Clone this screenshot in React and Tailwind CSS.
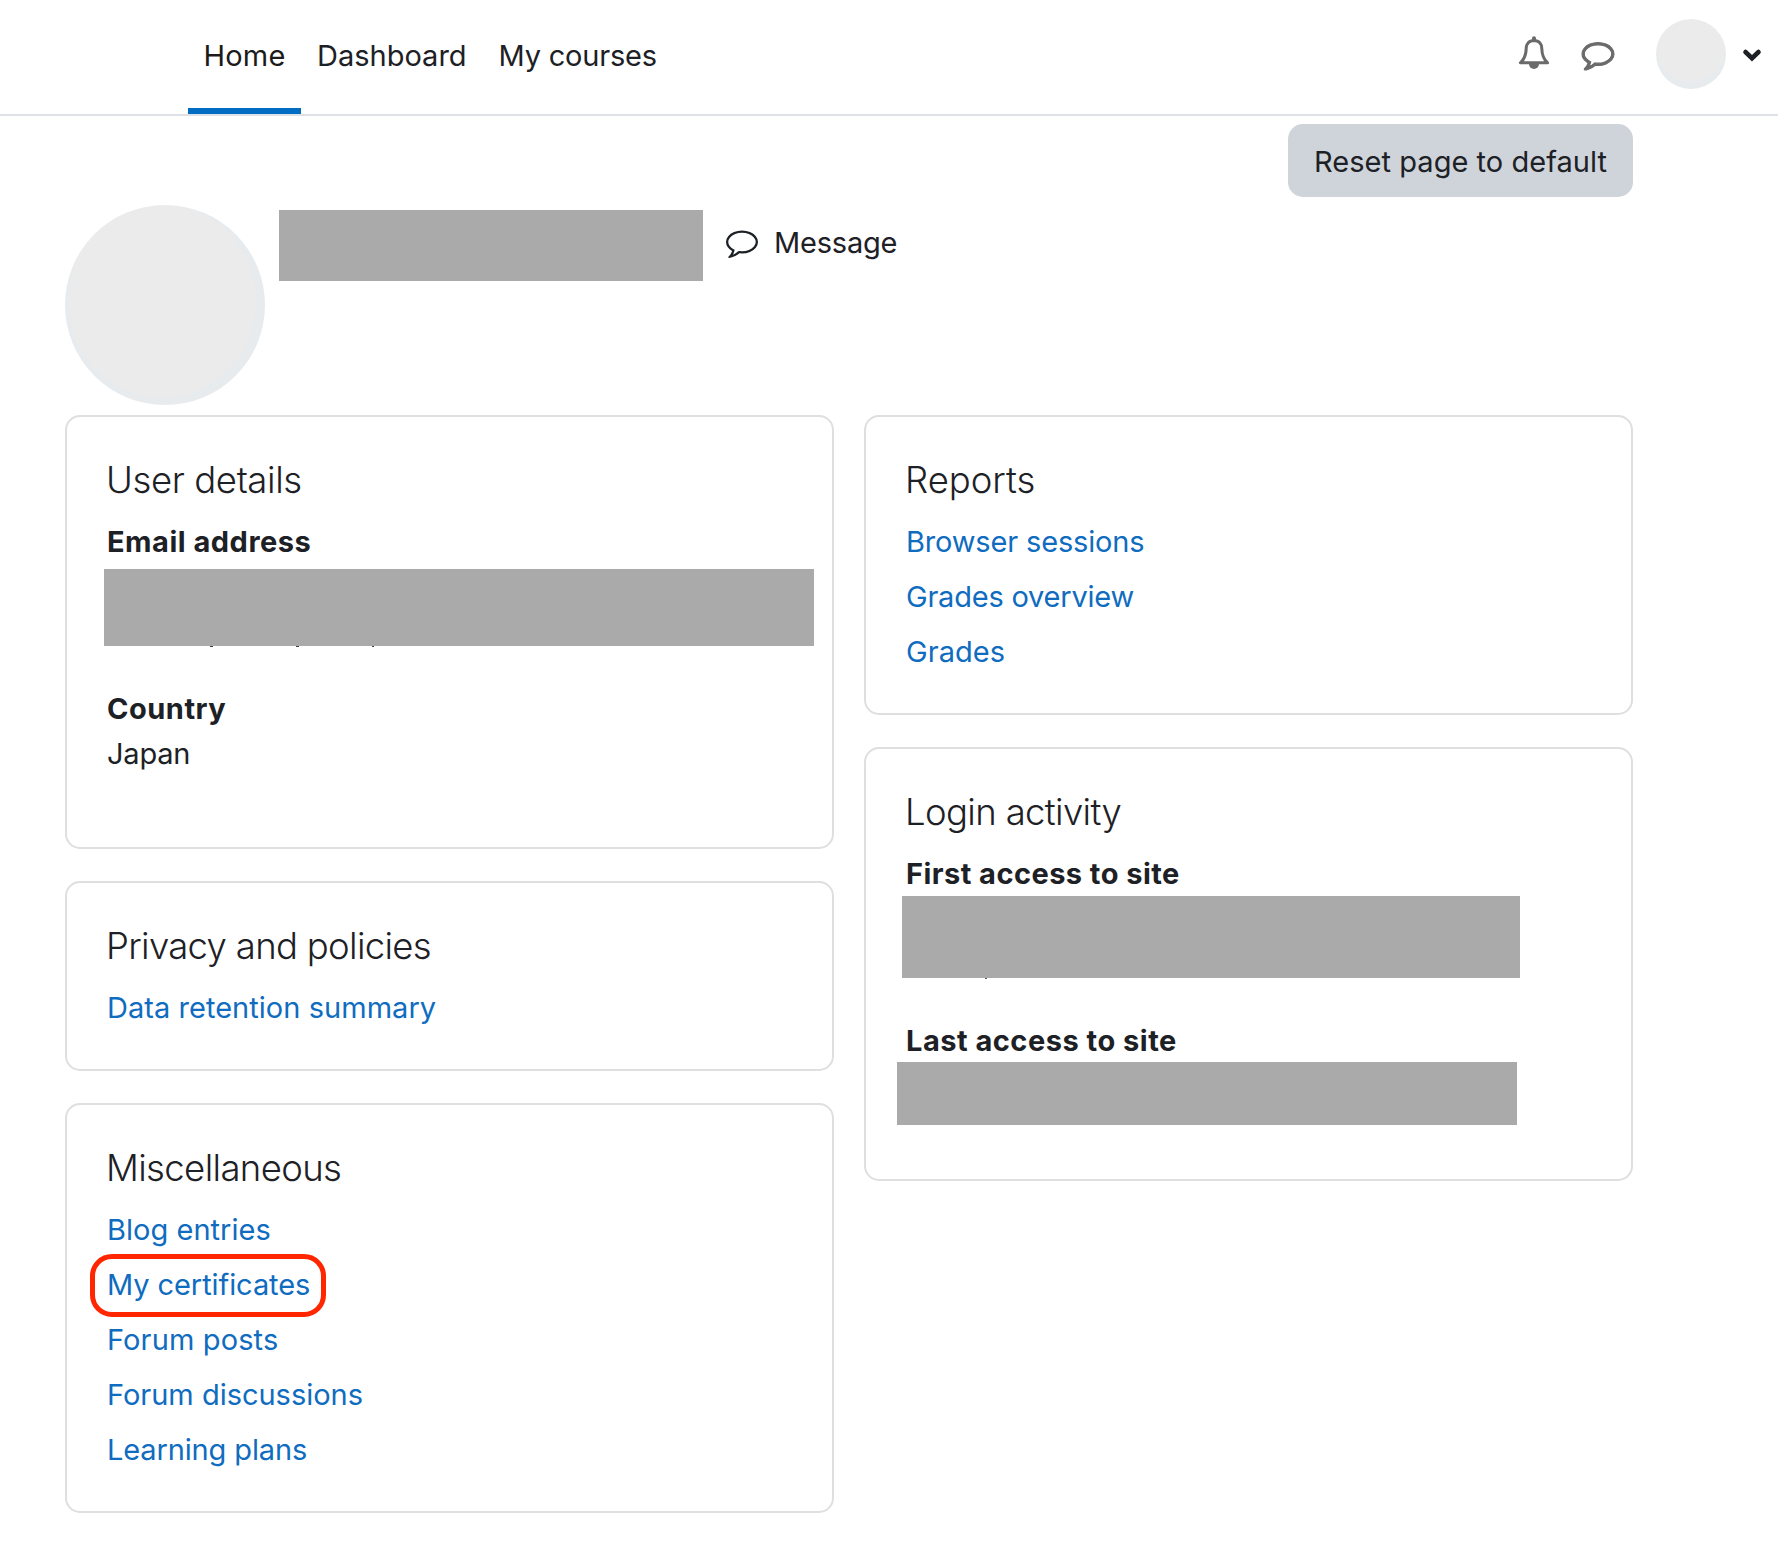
import React from "react";

const COMMENT_PATH =
  "M896 384q-204 0-381.5 69.5t-282 187.5-104.5 255q0 112 71.5 213.5t201.5 175.5l87 50-27 96q-24 91-70 172 152-63 275-171l43-38 57 6q69 8 130 8 204 0 381.5-69.5t282-187.5 104.5-255-104.5-255-282-187.5-381.5-69.5zm896 512q0 174-120 321.5t-326 233-450 85.5q-70 0-145-8-198 175-460 242-49 14-114 22h-5q-15 0-27-10.5t-16-27.5v-1q-3-4-.5-12t2-10 4.5-9.5l6-9 7-8.5 8-9q7-8 31-34.5t34.5-38 31-39.5 32.5-51 27-59 26-76q-157-89-247.5-220t-90.5-281q0-174 120-321.5t326-233 450-85.5 450 85.5 326 233 120 321.5z";

function CommentIcon({ className, strokeWidth = 0 }) {
  return (
    <svg viewBox="0 0 1792 1792" className={className} fill="currentColor" stroke="currentColor" strokeWidth={strokeWidth} overflow="visible" aria-hidden="true">
      <path d={COMMENT_PATH} />
    </svg>
  );
}

function BellIcon({ className }) {
  return (
    <svg viewBox="0 0 32 34" className={className} aria-hidden="true">
      <path
        d="M16 4.4C10.9 4.4 8.3 8 8.2 12.4C8.1 18.4 6.6 23 2.4 26.8H29.6C25.4 23 23.9 18.4 23.8 12.4C23.7 8 21.1 4.4 16 4.4Z"
        fill="none"
        stroke="currentColor"
        strokeWidth="3"
        strokeLinejoin="round"
      />
      <path d="M16 4V2.300" stroke="currentColor" strokeWidth="4" strokeLinecap="round" />
      <path d="M11 28H21A5 5 0 0 1 11 28Z" fill="currentColor" />
    </svg>
  );
}

function Redacted({ className }) {
  return <div className={`bg-[#aaaaaa] ${className}`} />;
}

function Card({ title, titleClass, className = "", children }) {
  return (
    <section className={`rounded-[15px] border-2 border-[#dfdfdf] bg-white px-10 pt-[41px] ${className}`}>
      <h3 className={`mb-4 -ml-px text-[36.5px] leading-[45px] font-light ${titleClass}`}>{title}</h3>
      {children}
    </section>
  );
}

function Links({ items }) {
  return (
    <ul className="flex flex-col gap-2.5">
      {items.map(([label, spacing, marked]) => (
        <li key={label} className="relative h-[45px] text-[#0f6cbf]">
          <a className={spacing}>{label}</a>
          {marked && (
            <span className="absolute -top-2 -left-[17px] h-[63px] w-[236px] rounded-[22px] border-[5px] border-[#ff2600]" />
          )}
        </li>
      ))}
    </ul>
  );
}

function Header() {
  return (
    <header className="flex h-[116px] items-start justify-between border-b-2 border-[#dee2e6] pl-[188px]">
      <nav className="flex h-[114px]">
        <a className="relative flex w-[113px] items-center pb-[3px] pl-[15.5px] tracking-[0.2px] text-[#1b1b1b]">
          Home
          <span className="absolute inset-x-0 bottom-0 h-1.5 bg-[#006dc2]" />
        </a>
        <a className="flex w-[181px] items-center pb-[3px] pl-4">Dashboard</a>
        <a className="flex items-center pb-[3px] pl-[16.5px] tracking-[-0.19px]">My courses</a>
      </nav>
      <div className="flex h-[108px] items-center pr-[16px]">
        <BellIcon className="mr-[32px] mb-[2px] h-[34px] w-[32px] text-[#6a6a6a]" />
        <CommentIcon className="mr-[42px] mb-[1px] h-[32px] w-[32px] text-[#6a6a6a]" strokeWidth={62} />
        <span className="mr-[16px] h-[70px] w-[70px] rounded-full bg-[radial-gradient(ellipse_34px_32px_at_35px_31px,#ebebeb_98%,#e7ebee_100%)]" />
        <svg viewBox="0 0 20 14" className="mt-[2px] h-[14px] w-[20px]" aria-hidden="true">
          <path d="M3.500 4L10 10.200L16.500 4" fill="none" stroke="#1d2125" strokeWidth="4.600" strokeLinecap="round" />
        </svg>
      </div>
    </header>
  );
}

export default function App() {
  return (
    <div className="h-[1550px] w-[1778px] overflow-hidden bg-white font-['Inter',sans-serif] text-[29px] leading-[45px] text-[#1d2125]">
      <Header />
      <main className="w-[1633px] pl-[65px]">
        <div className="flex justify-end pt-2">
          <button className="h-[73px] w-[345px] rounded-[15px] bg-[#ced4da] pt-[2px] tracking-[0.03px]">
            Reset page to default
          </button>
        </div>
        <div className="mt-2 flex h-[200px] items-start">
          <span className="h-[200px] w-[200px] rounded-full bg-[radial-gradient(ellipse_94px_97px_at_97px_96px,#ebebeb_99%,#e7ebee_100%)]" />
          <Redacted className="mt-[5px] ml-[14px] h-[71px] w-[424px]" />
          <a className="mt-[15px] ml-[23px] flex items-start">
            <CommentIcon className="mt-1.5 h-8 w-8" />
            <span className="ml-4 tracking-[-0.2px]">Message</span>
          </a>
        </div>
        <div className="mt-2.5 grid grid-cols-[769px_769px] items-start gap-[30px]">
          <div className="flex flex-col gap-8">
            <Card title="User details" titleClass="tracking-[-0.39px]" className="h-[434px]">
              <dl>
                <dt className="font-bold tracking-[0.5px]">Email address</dt>
                <dd className="h-[122px] pt-[5px]">
                  <Redacted className="-ml-[3px] h-[77px] w-[710px]" />
                  <div className="flex h-px">
                    <i className="ml-[103px] w-[3px] bg-[#3a3d40]" />
                    <i className="ml-[83px] w-[3px] bg-[#3a3d40]" />
                    <i className="ml-[73px] w-[2px] bg-[#3a3d40]" />
                  </div>
                </dd>
                <dt className="font-bold tracking-[0.51px]">Country</dt>
                <dd className="tracking-[-0.2px]">Japan</dd>
              </dl>
            </Card>
            <Card title="Privacy and policies" titleClass="tracking-[-0.68px]" className="h-[190px]">
              <Links items={[["Data retention summary", "tracking-[0.04px]"]]} />
            </Card>
            <Card title="Miscellaneous" titleClass="tracking-[-0.63px]" className="h-[410px]">
              <Links
                items={[
                  ["Blog entries", "tracking-[0.03px]"],
                  ["My certificates", "tracking-[-0.08px]", true],
                  ["Forum posts", "tracking-[0.13px]"],
                  ["Forum discussions", "tracking-[-0.015px]"],
                  ["Learning plans", "tracking-[-0.13px]"],
                ]}
              />
            </Card>
          </div>
          <div className="flex flex-col gap-8">
            <Card title="Reports" titleClass="tracking-[-0.03px]" className="h-[300px]">
              <Links
                items={[
                  ["Browser sessions", "tracking-[-0.16px]"],
                  ["Grades overview", "tracking-[-0.22px]"],
                  ["Grades", "tracking-[0.04px]"],
                ]}
              />
            </Card>
            <Card title="Login activity" titleClass="tracking-[-0.64px]" className="h-[434px]">
              <dl>
                <dt className="font-bold tracking-[0.45px]">First access to site</dt>
                <dd className="h-[122px]">
                  <Redacted className="-ml-[4px] h-[82px] w-[618px]" />
                  <i className="ml-[79px] block h-px w-[2px] bg-[#55585b]" />
                </dd>
                <dt className="font-bold tracking-[0.5px]">Last access to site</dt>
                <dd>
                  <Redacted className="-mt-px -ml-[9px] h-[63px] w-[620px]" />
                </dd>
              </dl>
            </Card>
          </div>
        </div>
      </main>
    </div>
  );
}
